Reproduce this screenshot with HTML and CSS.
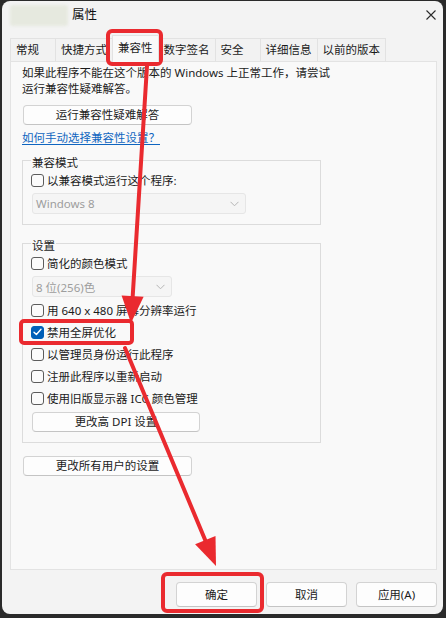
FILE: index.html
```html
<!DOCTYPE html>
<html lang="zh-CN">
<head>
<meta charset="utf-8">
<title>属性</title>
<link rel="stylesheet" href="styles.css">
</head>
<body>
<div class="window">
  <div class="titlebar">
    <div class="app-icon"></div>
    <span class="title">属性</span>
    <svg class="close" width="10" height="10" viewBox="0 0 10 10"><path d="M0.5 0.5 L9.5 9.5 M9.5 0.5 L0.5 9.5" stroke="#2b2b2b" stroke-width="1.1" fill="none"/></svg>
  </div>
  <div class="tabs">
    <div class="tab">常规</div>
    <div class="tab">快捷方式</div>
    <div class="tab active">兼容性</div>
    <div class="tab">数字签名</div>
    <div class="tab">安全</div>
    <div class="tab">详细信息</div>
    <div class="tab">以前的版本</div>
  </div>
  <div class="panel">
    <p class="intro">如果此程序不能在这个版本的 Windows 上正常工作，请尝试<br>运行兼容性疑难解答。</p>
    <div class="btn btn-trouble">运行兼容性疑难解答</div>
    <a class="link">如何手动选择兼容性设置？</a>
    <fieldset class="group group-compat">
      <legend>兼容模式</legend>
      <div class="check"><span class="box"></span>以兼容模式运行这个程序:</div>
      <div class="select select-os"><span>Windows 8</span><svg width="9" height="6" viewBox="0 0 9 6"><path d="M0.5 0.8 L4.5 4.8 L8.5 0.8" stroke="#b5b5b5" stroke-width="1" fill="none"/></svg></div>
    </fieldset>
    <fieldset class="group group-settings">
      <legend>设置</legend>
      <div class="check"><span class="box"></span>简化的颜色模式</div>
      <div class="select select-color"><span>8 位(256)色</span><svg width="9" height="6" viewBox="0 0 9 6"><path d="M0.5 0.8 L4.5 4.8 L8.5 0.8" stroke="#b5b5b5" stroke-width="1" fill="none"/></svg></div>
      <div class="check check-gap"><span class="box"></span>用 640 x 480 屏幕分辨率运行</div>
      <div class="check"><span class="box on"><svg width="9" height="8" viewBox="0 0 9 8"><path d="M1 4.2 L3.4 6.5 L8 1.3" stroke="#fff" stroke-width="1.4" fill="none" stroke-linecap="round" stroke-linejoin="round"/></svg></span>禁用全屏优化</div>
      <div class="check"><span class="box"></span>以管理员身份运行此程序</div>
      <div class="check"><span class="box"></span>注册此程序以重新启动</div>
      <div class="check"><span class="box"></span>使用旧版显示器 ICC 颜色管理</div>
      <div class="btn btn-dpi">更改高 DPI 设置</div>
    </fieldset>
    <div class="btn btn-all">更改所有用户的设置</div>
  </div>
  <div class="footer">
    <div class="btn btn-foot">确定</div>
    <div class="btn btn-foot">取消</div>
    <div class="btn btn-foot">应用(A)</div>
  </div>
</div>
<svg class="annot" width="446" height="618" viewBox="0 0 446 618">
  <g fill="none" stroke="#ea2a2f" stroke-width="4">
    <rect x="108" y="31" width="53" height="33" rx="4"/>
    <rect x="21" y="321" width="111" height="22" rx="3"/>
    <rect x="163" y="574" width="99" height="37" rx="4"/>
  </g>
  <g stroke="#ea2a2f" stroke-width="4" stroke-linecap="round">
    <line x1="147" y1="66" x2="132.6" y2="298"/>
    <line x1="125" y1="348" x2="206" y2="542"/>
  </g>
  <g fill="#ea2a2f">
    <polygon points="131,323 121.6,295.4 143.6,296.8"/>
    <polygon points="216,566 195.1,544.3 215.5,535.9"/>
  </g>
</svg>
</body>
</html>
```

FILE: styles.css
```css
html, body {
  margin: 0;
}
body {
  position: relative;
  box-sizing: border-box;
  width: 446px;
  height: 618px;
  padding: 1px 0 0 2px;
  overflow: hidden;
  background: #2a2a2a;
  font-family: "Noto Sans", "Noto Sans CJK SC", sans-serif;
  font-size: 11.5px;
  color: #1b1b1b;
}
.window {
  width: 441px;
  height: 613px;
  background: #f3f3f3;
  border-radius: 8px;
  overflow: hidden;
}
.titlebar {
  height: 28px;
  display: flex;
  align-items: center;
}
.app-icon {
  width: 58px;
  height: 21px;
  margin-left: 8px;
  margin-top: 1px;
  background: #e6e9df;
  border-radius: 3px;
  filter: blur(1.5px);
}
.title {
  margin-left: 4px;
  font-size: 12.5px;
  line-height: 16px;
  color: #111;
}
.close {
  margin-left: auto;
  margin-right: 7px;
}
.tabs {
  margin-top: 9px;
  height: 23px;
  padding-left: 8px;
  display: flex;
  align-items: flex-end;
}
.tab {
  box-sizing: border-box;
  height: 23px;
  min-width: 46px;
  padding: 0 5px;
  line-height: 22px;
  border: 1px solid #e2e2e2;
  border-bottom: none;
  margin-right: -1px;
  background: #f2f2f2;
  white-space: nowrap;
}
.tab.active {
  position: relative;
  z-index: 1;
  height: 27px;
  line-height: 24px;
  margin-bottom: -1px;
  background: #f9f9f9;
  min-width: 0;
}
.panel {
  box-sizing: border-box;
  width: 427px;
  height: 509px;
  margin-left: 8px;
  padding: 3px 11px 0 11px;
  background: #f9f9f9;
  border: 1px solid #e3e3e3;
}
.intro {
  margin: 0;
  line-height: 16px;
}
.btn {
  box-sizing: border-box;
  display: flex;
  align-items: center;
  justify-content: center;
  background: #fdfdfd;
  border: 1px solid #d3d3d3;
  border-bottom-color: #c4c4c4;
  border-radius: 4px;
  line-height: 16px;
  color: #1b1b1b;
}
.btn-trouble {
  width: 169px;
  height: 20px;
  margin-top: 8px;
  margin-left: 1px;
}
.link {
  display: block;
  width: fit-content;
  margin-top: 5px;
  line-height: 16px;
  color: #0f65c0;
  text-decoration: underline;
  text-underline-offset: 2px;
}
.group {
  box-sizing: border-box;
  width: 299px;
  min-width: 0;
  margin: 5px 0 0 0;
  padding: 0 0 10px 8px;
  border: 1px solid #dcdcdc;
}
.group legend {
  margin-left: 0;
  padding: 6px 1px 0;
  line-height: 12px;
}
.group-settings {
  margin-top: 9px;
}
.check {
  height: 22px;
  display: flex;
  align-items: center;
  gap: 3px;
  white-space: nowrap;
}
.check-gap {
  margin-top: 2px;
}
.box {
  box-sizing: border-box;
  width: 13px;
  height: 13px;
  border: 1px solid #5c5c5c;
  border-radius: 3px;
  background: #fbfbfb;
  display: flex;
  align-items: center;
  justify-content: center;
}
.box.on {
  background: #005fb8;
  border-color: #005fb8;
}
.select {
  box-sizing: border-box;
  height: 21px;
  margin-top: 2px;
  margin-left: 1px;
  padding: 0 6px 0 3px;
  display: flex;
  align-items: center;
  justify-content: space-between;
  background: #f5f5f5;
  border: 1px solid #e6e6e6;
  border-radius: 3px;
  color: #9d9d9d;
}
.select-os {
  width: 214px;
}
.select-color {
  width: 140px;
}
.btn-dpi {
  width: 168px;
  height: 20px;
  margin-top: 3px;
  margin-left: 1px;
}
.btn-all {
  width: 169px;
  height: 20px;
  margin-top: 13px;
  margin-left: 1px;
}
.footer {
  display: flex;
  justify-content: flex-end;
  gap: 9px;
  margin-top: 12px;
  padding-right: 6px;
}
.btn-foot {
  width: 81px;
  height: 25px;
}
.annot {
  position: absolute;
  left: 0;
  top: 0;
  pointer-events: none;
}
```
